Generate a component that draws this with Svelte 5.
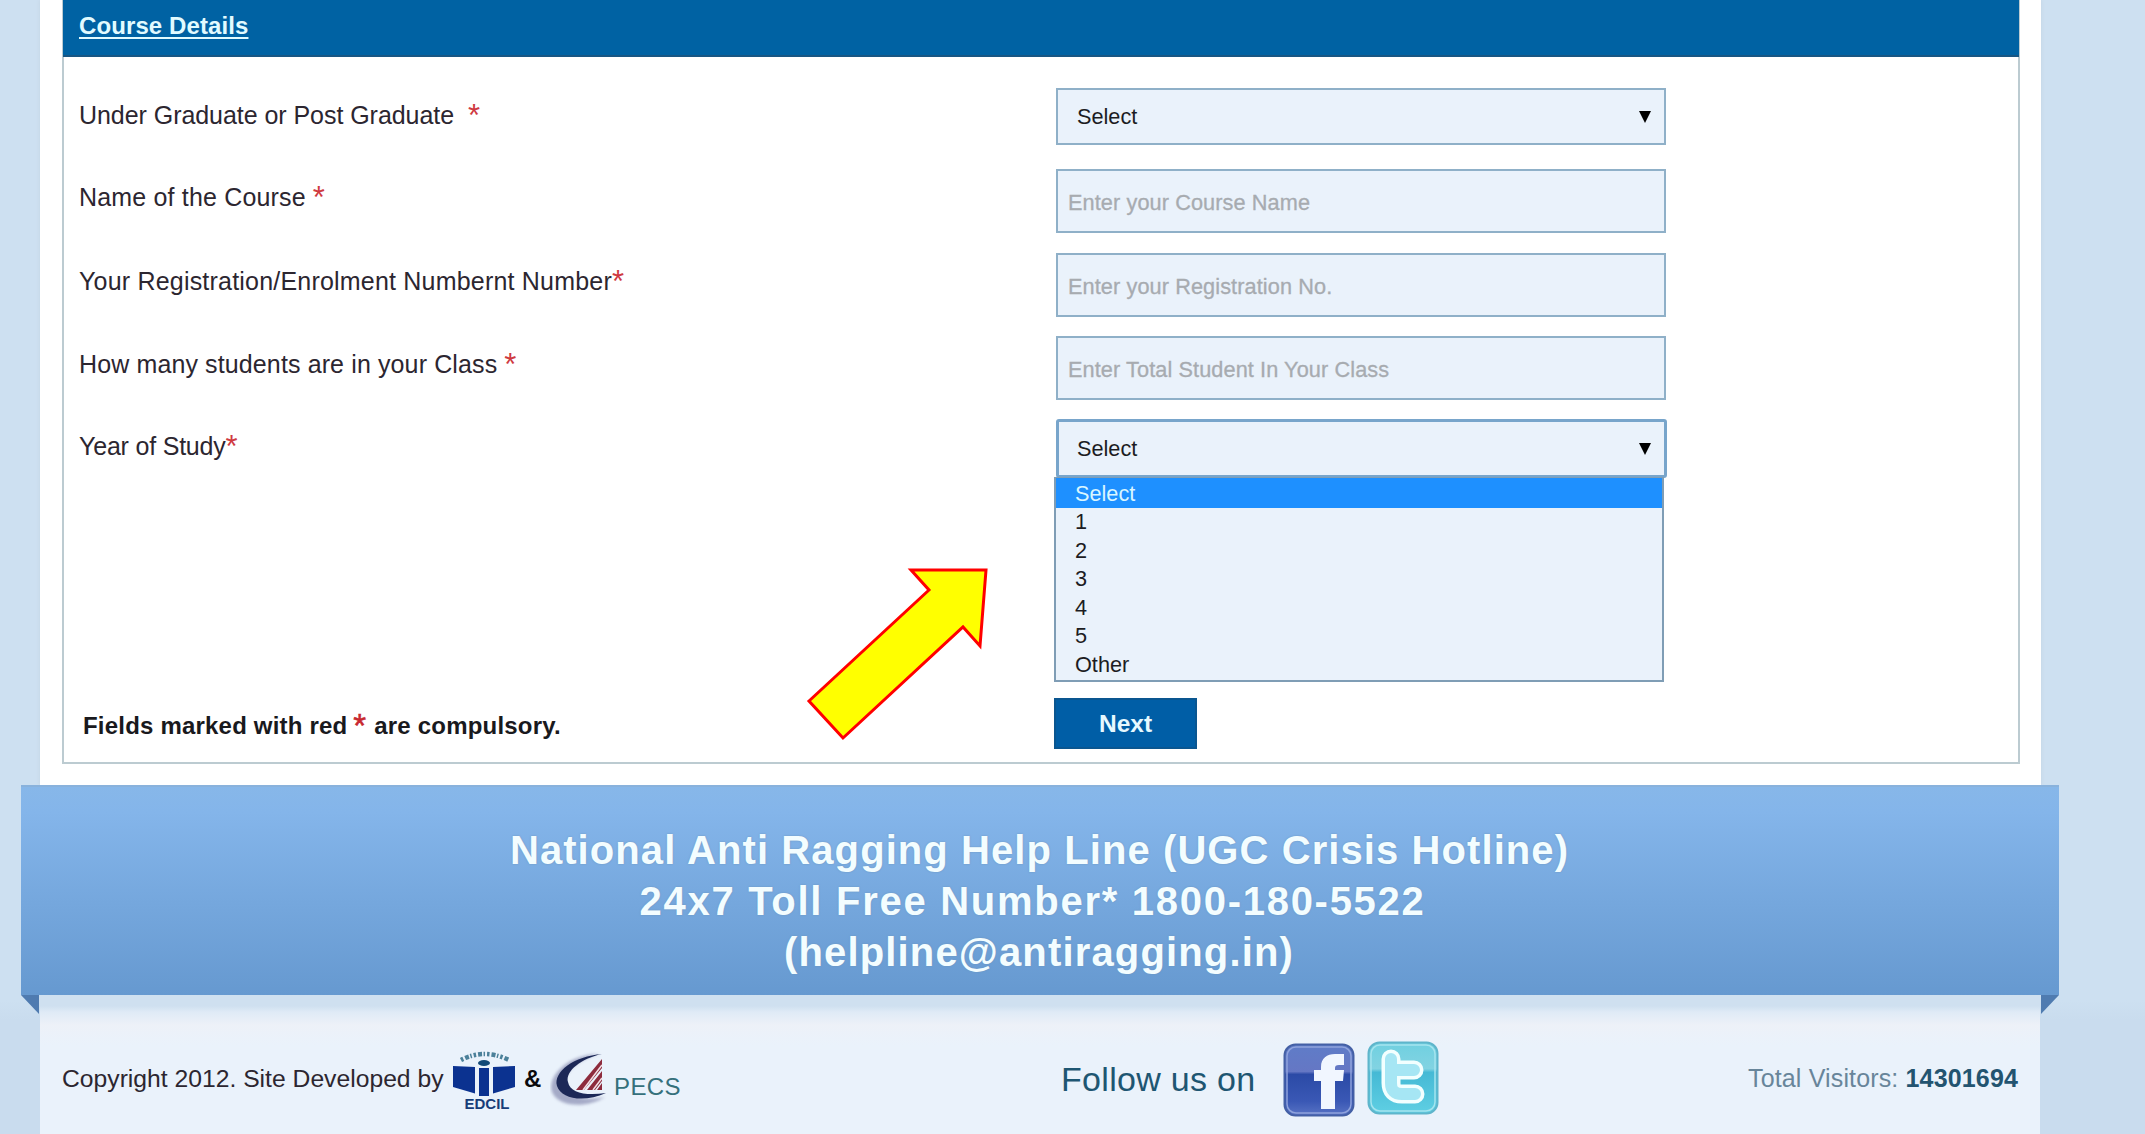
<script>
  const fields = [
    { kind: 'select', label: 'Under Graduate or Post Graduate', gap: 'wide', tracking: -0.05 },
    { kind: 'input', label: 'Name of the Course', gap: 'space', tracking: 0.17, placeholder: 'Enter your Course Name' },
    { kind: 'input', label: 'Your Registration/Enrolment Numbernt Number', gap: 'none', tracking: 0.2, placeholder: 'Enter your Registration No.' },
    { kind: 'input', label: 'How many students are in your Class', gap: 'space', tracking: 0.12, placeholder: 'Enter Total Student In Your Class' },
    { kind: 'select', label: 'Year of Study', gap: 'none', tracking: -0.2, open: true }
  ];
  const options = ['Select', '1', '2', '3', '4', '5', 'Other'];
</script>

<div class="screen">
  <main class="page">
    <section class="panel">
      <h2><span>Course Details</span></h2>
      <form onsubmit={(e) => e.preventDefault()}>
        {#each fields as field}
          <div class="row" class:short={field.kind === 'select'}>
            <div class="label"><span style:letter-spacing="{field.tracking}px">{field.label}</span><span class="star {field.gap}">*</span></div>
            {#if field.kind === 'input'}
              <input placeholder={field.placeholder} aria-label={field.label} />
            {:else}
              <div class="select" class:open={field.open}>
                <span>Select</span>
                <svg class="caret" viewBox="0 0 12 12"><path d="M0 0h12L6 12z" /></svg>
                {#if field.open}
                  <ul>
                    {#each options as option, i}
                      <li class:active={i === 0}>{option}</li>
                    {/each}
                  </ul>
                {/if}
              </div>
            {/if}
          </div>
        {/each}
        <div class="actions">
          <p>Fields marked with red <span class="req">*</span> are compulsory.</p>
          <button type="button">Next</button>
        </div>
      </form>
    </section>
  </main>

  <div class="banner">
    <div class="line first">National Anti Ragging Help Line (UGC Crisis Hotline)</div>
    <div class="line second">24x7 Toll Free Number* 1800-180-5522</div>
    <div class="line third">(helpline@antiragging.in)</div>
    <svg class="fold left" viewBox="0 0 18 19"><path d="M0 0h18v19z" /></svg>
    <svg class="fold right" viewBox="0 0 18 19"><path d="M0 0h18L0 19z" /></svg>
  </div>

  <footer>
    <div class="credit">
      <span>Copyright 2012. Site Developed by</span>
      <svg class="edcil" viewBox="0 0 64 64">
        <path d="M9 11Q32-1 57 11" fill="none" stroke="#4b8099" stroke-width="4.500" stroke-dasharray="2.500 2 4 1.500 1.500 2" />
        <ellipse cx="32" cy="14" rx="6" ry="3" fill="#124a78" />
        <path d="M1 17l22 1v26.500L1 38zM63 17l-22 1v26.500L63 38z" fill="#0b3290" />
        <path d="M27 19h10v28H27z" fill="#0b3290" />
        <text x="35" y="60" text-anchor="middle" textLength="45" lengthAdjust="spacingAndGlyphs">EDCIL</text>
      </svg>
      <b>&amp;</b>
      <svg class="pecs" viewBox="0 0 60 60">
        <defs>
          <filter id="soft" x="-20%" y="-20%" width="140%" height="140%"><feGaussianBlur stdDeviation="1.600" /></filter>
        </defs>
        <path d="M50 5C18 5-3 27 2 43c6 15 34 17 53 5C28 53 14 45 15 33 16 20 32 9 50 5z" fill="#8d92b5" opacity=".75" filter="url(#soft)" />
        <path d="M52 5C24 7 3 23 7 37c4 13 27 17 49 7-20 3-36 0-38-11C15 22 32 9 52 5z" fill="#1c2857" />
        <path d="M26 41L52 10v9L34 41zM37 41l15-19v10l-7 9zM47 41l5-7v7z" fill="#8d2b3d" />
        <path d="M33 41L52 16M43 41l9-12" stroke="#f2dfe5" stroke-width="1.500" />
      </svg>
      <span class="pecs-name">PECS</span>
    </div>
    <div class="follow">
      <span>Follow us on</span>
      <svg class="fb" viewBox="0 0 72 74">
        <defs>
          <linearGradient id="fbg" x1="0" y1="0" x2="0" y2="1">
            <stop offset="0" stop-color="#5f7cc8" /><stop offset=".38" stop-color="#6577c4" />
            <stop offset=".42" stop-color="#2b4aa6" /><stop offset=".8" stop-color="#3a58b5" /><stop offset="1" stop-color="#5873c4" />
          </linearGradient>
        </defs>
        <rect x="1.500" y="1.500" width="69" height="71" rx="11" fill="url(#fbg)" stroke="#4460a5" stroke-width="2" />
        <rect x="4" y="4" width="64" height="66" rx="9" fill="none" stroke="#8fa3dc" stroke-width="1.500" />
        <path d="M38 66V38h-7V27h7v-3c0-9 6-13 14-13h9v11h-5c-3 0-4 1-4 3v2h9l-1 11h-8v28z" fill="#f1f6ff" />
      </svg>
      <svg class="tw" viewBox="0 0 72 74">
        <defs>
          <linearGradient id="twg" x1="0" y1="0" x2="0" y2="1">
            <stop offset="0" stop-color="#6fd0e0" /><stop offset=".37" stop-color="#82d3e2" />
            <stop offset=".42" stop-color="#45b9d5" /><stop offset="1" stop-color="#5fcfe3" />
          </linearGradient>
        </defs>
        <rect x="1.500" y="1.500" width="69" height="71" rx="11" fill="url(#twg)" stroke="#5fb5cb" stroke-width="2" />
        <rect x="4" y="4" width="64" height="66" rx="9" fill="none" stroke="#a5e4ee" stroke-width="1.500" />
        <path d="M24 18v24q0 11 11 11h13M25 29h22" fill="none" stroke="#f2ffff" stroke-width="19" stroke-linecap="round" stroke-linejoin="round" />
        <path d="M24 18v24q0 11 11 11h13M25 29h22" fill="none" stroke="#a6e6f4" stroke-width="12" stroke-linecap="round" stroke-linejoin="round" />
      </svg>
    </div>
    <div class="visitors">Total Visitors: <b>14301694</b></div>
  </footer>

  <svg class="pointer" viewBox="0 0 190 180">
    <path d="M3 124L123 13 105-7h75l-6 76-17-19L37 161z" transform="translate(-1 11)" />
  </svg>
</div>

<style>
  :global(body) {
    background: #cde0f1;
  }
  .screen {
    position: relative;
    width: 2145px;
    height: 1134px;
    overflow: hidden;
    display: flex;
    flex-direction: column;
    background: linear-gradient(#cde0f1 1000px, #c9dcee 1020px);
    font-family: 'Liberation Sans', Arial, sans-serif;
    font-size: 25px;
    line-height: 30px;
    color: #2c2630;
  }
  .page {
    flex: none;
    box-sizing: border-box;
    height: 785px;
    width: 2001px;
    margin-left: 40px;
    padding: 0 21px 0 22px;
    background: #fff;
    box-shadow: 0 0 4px #c3d3e2;
  }
  .panel {
    box-sizing: border-box;
    height: 764px;
    border: 2px solid #bccbd1;
    border-top: 0;
  }
  h2 {
    margin: 0 -1px;
    box-sizing: border-box;
    height: 57px;
    padding: 11px 16px 0;
    background: #0062a3;
    border-bottom: 2px solid #185683;
    font-size: 24px;
    letter-spacing: 0.1px;
    color: #e2fbff;
  }
  h2 span {
    text-decoration: underline;
    text-decoration-thickness: 2px;
    text-underline-offset: 3px;
  }
  form {
    padding: 31px 0 0 15px;
    display: flex;
    flex-direction: column;
  }
  .row {
    display: grid;
    grid-template-columns: 977px 610px;
    height: 83px;
    align-items: start;
  }
  .row:first-child {
    height: 81px;
  }
  .row:nth-child(2) {
    height: 84px;
  }
  .label {
    padding-top: 13px;
    white-space: nowrap;
  }
  .short .label {
    padding-top: 12px;
  }
  .star {
    display: inline-block;
    font-size: 31px;
    line-height: 20px;
    color: #cf3a41;
    position: relative;
    top: 2px;
  }
  .star.wide {
    margin-left: 14px;
  }
  .star.space {
    margin-left: 7px;
  }
  input,
  .select {
    box-sizing: border-box;
    width: 610px;
    height: 64px;
    margin: 0;
    border: 2px solid #8fb0c8;
    border-radius: 0;
    background: #eaf2fb;
    font: 21.7px/24px 'Liberation Sans', Arial, sans-serif;
    color: #1c1c22;
    outline: 0;
  }
  input {
    padding: 3px 10px 0;
    letter-spacing: 0.1px;
  }
  input::placeholder {
    color: #a7abb0;
    opacity: 1;
    -webkit-text-stroke: 0.3px #a7abb0;
  }
  .select {
    position: relative;
    height: 57px;
    display: flex;
    align-items: center;
    justify-content: space-between;
    padding: 1px 13px 0 19px;
  }
  .select.open {
    height: 59px;
    width: 611px;
    border: 3px solid #78a5cb;
    border-radius: 3px;
    padding: 1px 13px 0 18px;
  }
  .caret {
    width: 12px;
    height: 12px;
    fill: #000;
  }
  .open .caret {
    margin-bottom: 1px;
  }
  ul {
    position: absolute;
    z-index: 2;
    left: -5px;
    top: 55px;
    box-sizing: border-box;
    width: 610px;
    height: 205px;
    margin: 0;
    padding: 0;
    list-style: none;
    background: #eaf2fb;
    border: 2px solid #7f9db5;
    border-top-width: 1px;
    line-height: 28.6px;
  }
  li {
    padding-left: 19px;
  }
  li.active {
    background: #1e90ff;
    color: #d9f6ff;
    padding-top: 1px;
    line-height: 29px;
  }
  .actions {
    display: grid;
    grid-template-columns: 975px auto;
    justify-content: start;
    padding-top: 196px;
  }
  .actions p {
    margin: 13px 0 0 4px;
    font-size: 24px;
    font-weight: bold;
    letter-spacing: 0.2px;
    color: #19191d;
  }
  .req {
    display: inline-block;
    font-size: 33px;
    line-height: 20px;
    color: #c8282f;
    position: relative;
    left: -1px;
    top: 3px;
    font-weight: normal;
    -webkit-text-stroke: 0.5px #c8282f;
  }
  button {
    width: 143px;
    height: 51px;
    margin: 0;
    padding: 0;
    border: 2px solid #0a5690;
    border-radius: 0;
    background: #005ea6;
    color: #e6f9ff;
    font: bold 24.5px/30px 'Liberation Sans', Arial, sans-serif;
  }
  .banner {
    position: relative;
    z-index: 1;
    flex: none;
    box-sizing: border-box;
    width: 2038px;
    height: 210px;
    margin-left: 21px;
    padding-top: 38px;
    background: linear-gradient(#87b7e9, #84b5ea 12%, #6699d0);
    border-top: 2px solid #89b2dc;
    text-align: center;
    font-size: 40px;
    line-height: 51px;
    font-weight: bold;
    color: #f3fdff;
    text-shadow: 0 0 2px #6b93bb;
  }
  .first {
    letter-spacing: 1.08px;
  }
  .second {
    letter-spacing: 1.72px;
    padding-right: 14px;
  }
  .third {
    letter-spacing: 1.15px;
    padding-right: 1px;
  }
  .line {
    margin-left: -1px;
  }
  .fold {
    position: absolute;
    top: 208px;
    width: 18px;
    height: 19px;
    fill: #4f7bb0;
  }
  .fold.left {
    left: 0;
  }
  .fold.right {
    right: 0;
  }
  footer {
    flex: none;
    box-sizing: border-box;
    width: 2000px;
    height: 139px;
    margin-left: 40px;
    padding: 0 22px;
    background: linear-gradient(#cfe0f0 0, #cfe0f0 11px, #dfeaf6 17px, #edf1f8 30px, #eaf2fb 50px);
    display: grid;
    grid-template-columns: 999px 1fr auto;
  }
  .credit,
  .follow {
    display: flex;
    align-items: flex-start;
  }
  .credit {
    white-space: nowrap;
  }
  .credit > span:first-child {
    margin-top: 69px;
    width: 390px;
    font-size: 24.7px;
  }
  .edcil {
    width: 64px;
    height: 64px;
    margin-top: 54px;
    flex: none;
  }
  .edcil text {
    font: bold 14px 'Liberation Sans', Arial, sans-serif;
    fill: #173d78;
  }
  .credit b {
    margin: 69px 0 0 8px;
    width: 24px;
    font-size: 24px;
    color: #0a0a0c;
  }
  .pecs {
    width: 60px;
    height: 60px;
    margin-top: 54px;
    flex: none;
    position: relative;
    left: 2px;
  }
  .pecs-name {
    margin: 77px 0 0 6px;
    font-size: 24px;
    letter-spacing: 0.4px;
    color: #35707b;
  }
  .follow span {
    width: 222px;
    margin-top: 66px;
    line-height: 36px;
    font-size: 34px;
    letter-spacing: 0.3px;
    color: #1e5672;
    white-space: nowrap;
  }
  .follow .fb {
    width: 72px;
    height: 74px;
    margin-top: 48px;
  }
  .follow .tw {
    width: 72px;
    height: 74px;
    margin: 46px 0 0 12px;
  }
  .visitors {
    margin-top: 68px;
    letter-spacing: 0.15px;
    color: #68859a;
  }
  .visitors b {
    color: #235470;
  }
  .pointer {
    position: absolute;
    left: 807px;
    top: 566px;
    width: 190px;
    height: 180px;
    fill: #ff0;
    stroke: #f00;
    stroke-width: 3;
    overflow: visible;
  }
</style>
